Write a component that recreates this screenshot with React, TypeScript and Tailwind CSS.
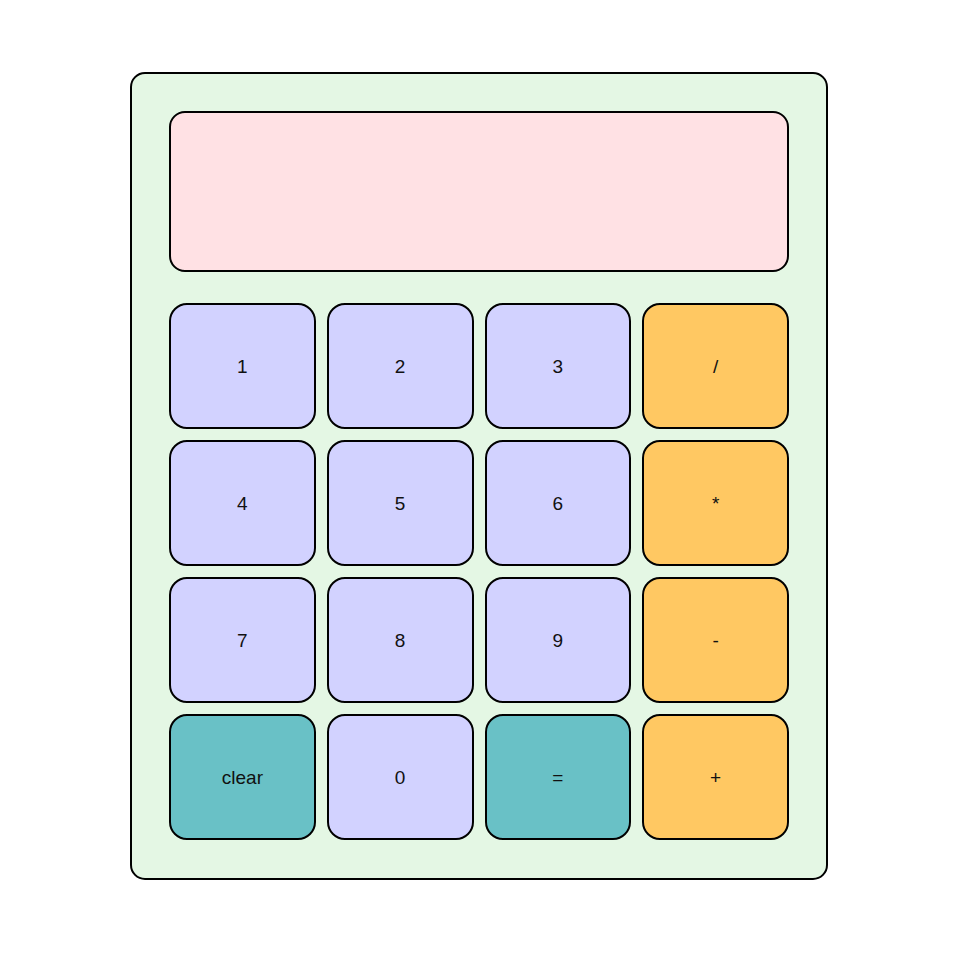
const keys = [
  { label: '1', kind: 'num' },
  { label: '2', kind: 'num' },
  { label: '3', kind: 'num' },
  { label: '/', kind: 'op' },
  { label: '4', kind: 'num' },
  { label: '5', kind: 'num' },
  { label: '6', kind: 'num' },
  { label: '*', kind: 'op' },
  { label: '7', kind: 'num' },
  { label: '8', kind: 'num' },
  { label: '9', kind: 'num' },
  { label: '-', kind: 'op' },
  { label: 'clear', kind: 'fn' },
  { label: '0', kind: 'num' },
  { label: '=', kind: 'fn' },
  { label: '+', kind: 'op' },
];

const keyColor: Record<string, string> = {
  num: 'bg-[#d2d2ff]',
  op: 'bg-[#ffc862]',
  fn: 'bg-[#69c1c6]',
};

const App = () => {
  return (
    <div className="min-h-screen bg-white pt-[72px] font-['Liberation_Sans',Arial,sans-serif]">
      <div className="mx-auto w-[698px] h-[808px] rounded-[15px] border-2 border-black bg-[#e4f7e4] px-[37px] pt-[37px]">
        {/* Display */}
        <div className="h-[161px] rounded-[16px] border-2 border-black bg-[#ffe1e4]"></div>

        {/* Keypad */}
        <div className="mt-[31px] grid grid-cols-4 gap-x-[11px] gap-y-[11px]">
          {keys.map((k) => (
            <button
              key={k.label}
              className={`h-[126px] pt-[3px] rounded-[18px] border-2 border-black ${keyColor[k.kind]} flex items-center justify-center text-[19px] text-[#111]`}
            >
              {k.label}
            </button>
          ))}
        </div>
      </div>
    </div>
  );
};

export default App;
